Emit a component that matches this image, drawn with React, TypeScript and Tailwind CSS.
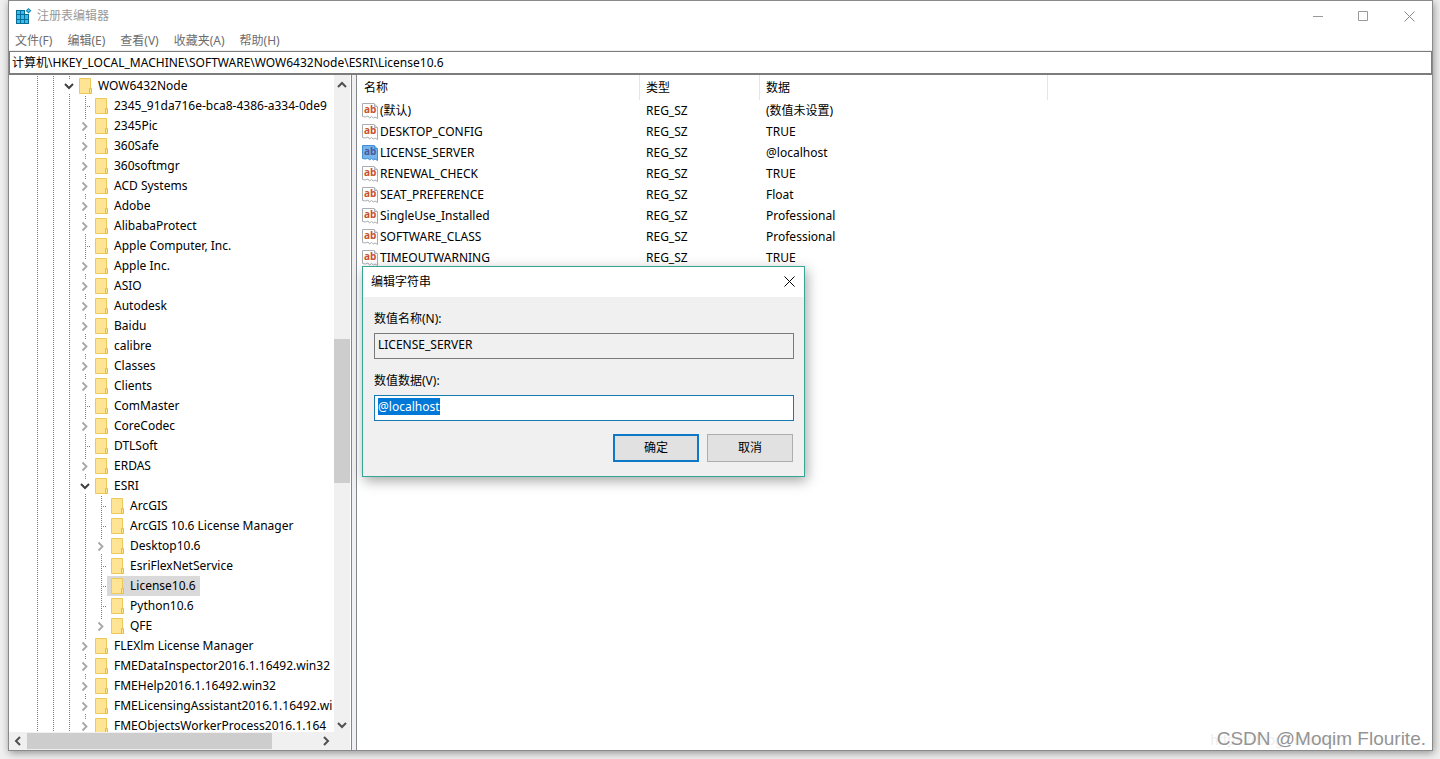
import { useEffect, useRef } from "react";

type TreeItem = {
  name: string;
  depth: number;
  state: "open" | "closed" | "leaf";
  selected?: boolean;
  last?: boolean;
};

const tree: TreeItem[] = [
  { name: "WOW6432Node", depth: 0, state: "open" },
  { name: "2345_91da716e-bca8-4386-a334-0de9", depth: 1, state: "leaf" },
  { name: "2345Pic", depth: 1, state: "closed" },
  { name: "360Safe", depth: 1, state: "closed" },
  { name: "360softmgr", depth: 1, state: "closed" },
  { name: "ACD Systems", depth: 1, state: "closed" },
  { name: "Adobe", depth: 1, state: "closed" },
  { name: "AlibabaProtect", depth: 1, state: "closed" },
  { name: "Apple Computer, Inc.", depth: 1, state: "leaf" },
  { name: "Apple Inc.", depth: 1, state: "closed" },
  { name: "ASIO", depth: 1, state: "closed" },
  { name: "Autodesk", depth: 1, state: "closed" },
  { name: "Baidu", depth: 1, state: "closed" },
  { name: "calibre", depth: 1, state: "closed" },
  { name: "Classes", depth: 1, state: "closed" },
  { name: "Clients", depth: 1, state: "closed" },
  { name: "ComMaster", depth: 1, state: "leaf" },
  { name: "CoreCodec", depth: 1, state: "closed" },
  { name: "DTLSoft", depth: 1, state: "leaf" },
  { name: "ERDAS", depth: 1, state: "closed" },
  { name: "ESRI", depth: 1, state: "open" },
  { name: "ArcGIS", depth: 2, state: "leaf" },
  { name: "ArcGIS 10.6 License Manager", depth: 2, state: "leaf" },
  { name: "Desktop10.6", depth: 2, state: "closed" },
  { name: "EsriFlexNetService", depth: 2, state: "leaf" },
  { name: "License10.6", depth: 2, state: "leaf", selected: true },
  { name: "Python10.6", depth: 2, state: "leaf" },
  { name: "QFE", depth: 2, state: "closed", last: true },
  { name: "FLEXlm License Manager", depth: 1, state: "closed" },
  { name: "FMEDataInspector2016.1.16492.win32", depth: 1, state: "closed" },
  { name: "FMEHelp2016.1.16492.win32", depth: 1, state: "closed" },
  { name: "FMELicensingAssistant2016.1.16492.wi", depth: 1, state: "closed" },
  { name: "FMEObjectsWorkerProcess2016.1.164", depth: 1, state: "closed" },
];

const values = [
  { name: "(默认)", data: "(数值未设置)" },
  { name: "DESKTOP_CONFIG", data: "TRUE" },
  { name: "LICENSE_SERVER", data: "@localhost", selected: true },
  { name: "RENEWAL_CHECK", data: "TRUE" },
  { name: "SEAT_PREFERENCE", data: "Float" },
  { name: "SingleUse_Installed", data: "Professional" },
  { name: "SOFTWARE_CLASS", data: "Professional" },
  { name: "TIMEOUTWARNING", data: "TRUE" },
];

const menus = ["文件(F)", "编辑(E)", "查看(V)", "收藏夹(A)", "帮助(H)"];

function RegeditIcon() {
  return (
    <svg width="16" height="16" viewBox="0 0 16 16">
      <path d="M0 2h9v4h4v10H0z" fill="#0b6d96" />
      <path d="M1 3h3v3H1zM5 3h3v3H5zM1 7h3v4H1zM5 7h3v4H5zM9 7h3v4H9zM1 12h3v3H1zM5 12h3v3H5zM9 12h3v3H9z" fill="#35bdf0" />
      <path d="M12.500 0l2.900 2.700-2.900 2.700-2.900-2.700z" fill="#1487b5" />
      <path d="M12.500 1.300l1.500 1.400-1.500 1.400-1.500-1.400z" fill="#4cc4ee" />
    </svg>
  );
}

function FolderIcon() {
  return (
    <svg width="14" height="16" viewBox="0 0 14 16" className="shrink-0">
      <path d="M.5 .5h11v15H.5z" fill="#ffe493" stroke="#ecc95a" />
      <path d="M10.500 10.500h2v5h-2z" fill="#ffe493" stroke="#e6bd3e" />
    </svg>
  );
}

function StringIcon({ selected }: { selected?: boolean }) {
  const line = selected ? "#3f8fd8" : "#a9adb2";
  return (
    <svg width="16" height="16" viewBox="0 0 16 16" className="shrink-0">
      <path
        d="M.5 .5h11.500l3.500 3.500v11.500l-2.500-1.500-1.500 1-2-1.500-2 1.500-1.500-2-2.500 1-3-.500z"
        fill={selected ? "#78b4ec" : "#fff"}
        stroke={line}
      />
      <path d="M12.500 .5v3h3" fill="none" stroke={line} />
      <text
        x="2"
        y="10"
        fontSize="10"
        fontWeight="700"
        fontFamily="Open Sans, sans-serif"
        fill={selected ? "#4a5a9c" : "#c9502f"}
      >
        ab
      </text>
    </svg>
  );
}

// one 16px step of indentation with its dotted line
function Guide() {
  return (
    <svg width="16" height="20" className="shrink-0">
      <path d="M8.500 0v20" stroke="#808080" strokeDasharray="1 1" />
    </svg>
  );
}

function Expander({ item }: { item: TreeItem }) {
  const { state, last } = item;
  return (
    <svg width="14" height="20" className="shrink-0" fill="none">
      {state === "leaf" ? (
        <path d="M8.500 0v20M8 10.500h6" stroke="#808080" strokeDasharray="1 1" />
      ) : (
        <path d={last ? "M8.500 0v3" : "M8.500 0v3M8.500 18v2"} stroke="#808080" strokeDasharray="1 1" />
      )}
      {state === "closed" && <path d="M5.500 6.500l4 4-4 4" stroke="#a6a6a6" strokeWidth="1.800" />}
      {state === "open" && <path d="M4 8l4 4 4-4" stroke="#404040" strokeWidth="2" />}
    </svg>
  );
}

function Arrow({ d }: { d: string }) {
  return (
    <svg width="16" height="16" fill="none" className="shrink-0">
      <path d={d} stroke="#505050" strokeWidth="2" />
    </svg>
  );
}

function TreeRow({ item }: { item: TreeItem }) {
  return (
    <li className="flex h-5 shrink-0 items-center pl-5">
      {Array.from({ length: item.depth + 2 }, (_, i) => (
        <Guide key={i} />
      ))}
      <Expander item={item} />
      <span className={`flex h-5 items-center gap-[5px] whitespace-nowrap pl-1 pr-1 ${item.selected ? "bg-[#d9d9d9]" : ""}`}>
        <FolderIcon />
        {item.name}
      </span>
    </li>
  );
}

function EditDialog() {
  const input = useRef<HTMLInputElement>(null);

  useEffect(() => {
    input.current?.focus();
    input.current?.select();
  }, []);

  return (
    <div
      role="dialog"
      aria-labelledby="dialog-title"
      className="absolute left-[5px] top-[191px] w-[443px] border border-[#35a693] bg-[#f0f0f0] shadow-[2px_4px_12px_rgba(0,0,0,0.35)]"
    >
      <div className="flex h-[30px] items-center justify-between bg-white px-2">
        <h2 id="dialog-title">编辑字符串</h2>
        <button aria-label="关闭" className="flex h-4 items-center">
          <svg width="12" height="12" stroke="#000" fill="none">
            <path d="M.5 .5l10 10M10.500 .5l-10 10" />
          </svg>
        </button>
      </div>
      <form className="flex flex-col pb-[14px] pl-[11px] pr-[10px]" onSubmit={(e) => e.preventDefault()}>
        <label htmlFor="value-name" className="mb-1 mt-3 h-5 leading-5">
          数值名称(N):
        </label>
        <input
          id="value-name"
          readOnly
          value="LICENSE_SERVER"
          className="h-[26px] border border-[#7a7a7a] bg-[#f0f0f0] px-[3px] pb-1 outline-none"
        />
        <label htmlFor="value-data" className="mb-1 mt-3 h-5 leading-5">
          数值数据(V):
        </label>
        <input
          id="value-data"
          ref={input}
          defaultValue="@localhost"
          className="h-[26px] border border-[#1878b0] bg-white px-[3px] pb-1 outline-none selection:bg-[#0078d7] selection:text-white"
        />
        <div className="mt-[13px] flex justify-end gap-2 pr-px">
          <button type="submit" className="h-7 w-[86px] border-2 border-[#0f78c8] bg-[#e1e1e1]">
            确定
          </button>
          <button type="button" className="h-7 w-[86px] border border-[#adadad] bg-[#e1e1e1]">
            取消
          </button>
        </div>
      </form>
    </div>
  );
}

export default function App() {
  return (
    <div className="flex h-screen bg-[#f0f0f0] pb-2 pl-2 pr-[7px] font-['Noto_Sans','Noto_Sans_CJK_SC',sans-serif] text-[12px] leading-4 text-black">
      <div className="relative flex min-w-0 flex-1 flex-col border border-[#8a8a8a] bg-white shadow-[1px_2px_8px_rgba(0,0,0,0.4)]">
        <header className="flex h-[30px] shrink-0 items-center gap-[5px] pl-[7px] text-[#999999]">
          <RegeditIcon />
          <h1 className="flex-1">注册表编辑器</h1>
          <div className="flex">
            <button aria-label="最小化" className="flex h-7 w-[45px] items-center justify-center">
              <svg width="11" height="11" stroke="#999">
                <path d="M0 5.500h10" />
              </svg>
            </button>
            <button aria-label="最大化" className="flex h-7 w-[45px] items-center justify-center">
              <svg width="11" height="11" stroke="#999" fill="none">
                <path d="M.5 .5h9v9h-9z" />
              </svg>
            </button>
            <button aria-label="关闭" className="flex h-7 w-[46px] items-center justify-center">
              <svg width="11" height="11" stroke="#888" fill="none">
                <path d="M.5 .5l10 10M10.500 .5l-10 10" />
              </svg>
            </button>
          </div>
        </header>

        <nav className="flex h-5 shrink-0 items-center gap-[15px] border-b border-[#f0f0f0] pl-[6px] text-[#6d6d6d]">
          {menus.map((m) => (
            <button key={m}>{m}</button>
          ))}
        </nav>

        <input
          aria-label="地址"
          readOnly
          value="计算机\HKEY_LOCAL_MACHINE\SOFTWARE\WOW6432Node\ESRI\License10.6"
          className="h-6 shrink-0 border border-b-2 border-[#7c7c7c] px-[2px] pb-px outline-none"
        />

        <div className="flex min-h-0 flex-1">
          <aside className="flex w-[343px] shrink-0 flex-col border-r border-[#828790] pr-px">
            <div className="flex min-h-0 flex-1">
              <ul className="flex min-w-0 flex-1 flex-col overflow-hidden pt-px">
                {tree.map((item) => (
                  <TreeRow key={item.name} item={item} />
                ))}
              </ul>
              <div className="flex w-4 shrink-0 flex-col bg-[#f0f0f0]">
                <Arrow d="M4 12l4-4 4 4" />
                <div className="grow-[248]" />
                <div className="grow-[143] bg-[#cdcdcd]" />
                <div className="grow-[233]" />
                <Arrow d="M4 7l4 4 4-4" />
              </div>
            </div>
            <div className="flex h-[18px] shrink-0 items-center bg-[#f0f0f0] pr-4">
              <Arrow d="M11 4L7 8l4 4" />
              <div className="ml-[2px] h-4 grow-[244] bg-[#cdcdcd]" />
              <div className="grow-[46]" />
              <Arrow d="M6 4l4 4-4 4" />
            </div>
          </aside>

          <div className="w-1 shrink-0 bg-[#f0f0f0]" />

          <main className="relative min-w-0 flex-1 border-l border-[#828790]">
            <table className="w-full table-fixed border-separate border-spacing-0 text-left">
              <colgroup>
                <col className="w-[283px]" />
                <col className="w-[120px]" />
                <col className="w-[288px]" />
                <col />
              </colgroup>
              <thead>
                <tr className="h-[25px]">
                  <th className="border-r border-[#e5e5e5] pl-[7px] font-normal">名称</th>
                  <th className="border-r border-[#e5e5e5] pl-[6px] font-normal">类型</th>
                  <th className="border-r border-[#e5e5e5] pl-[6px] font-normal">数据</th>
                  <td />
                </tr>
              </thead>
              <tbody>
                {values.map((v) => (
                  <tr key={v.name} className="h-[21px]">
                    <td className="pl-[5px]">
                      <div className="flex items-center gap-[2px]">
                        <StringIcon selected={v.selected} />
                        {v.name}
                      </div>
                    </td>
                    <td className="pl-[6px]">REG_SZ</td>
                    <td className="pl-[6px]">{v.data}</td>
                    <td />
                  </tr>
                ))}
              </tbody>
            </table>
            <EditDialog />
          </main>
        </div>

        <p className="absolute bottom-0 right-[86px] font-[Roboto,sans-serif] text-[14px] leading-5 text-[#eeeeee]">
          https://blog.csdn.net/
        </p>
        <p className="absolute -bottom-px right-[6px] font-['Liberation_Sans',sans-serif] text-[19px] leading-6 text-[#949494] [text-shadow:1px_1px_0_#fff]">
          CSDN @Moqim Flourite.
        </p>
      </div>
    </div>
  );
}
